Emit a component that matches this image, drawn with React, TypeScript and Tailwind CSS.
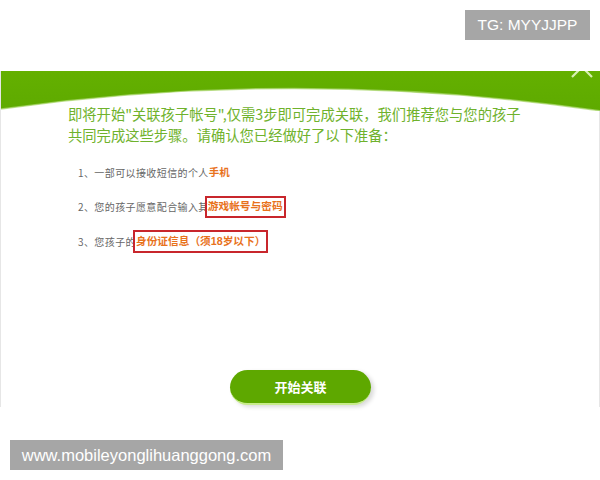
import React from "react";

const cjk = { fontFamily: '"Noto Sans CJK SC", "Noto Sans", sans-serif' };
const latin = { fontFamily: '"Liberation Sans", Arial, sans-serif' };

export default function App() {
  return (
    <div className="relative w-[600px] h-[480px] bg-white overflow-hidden" style={cjk}>
      <div className="h-[71px]" />
      <div className="relative h-[336px] flex flex-col border-x border-[#e6e6e6] bg-white">
        <svg width="600" height="40" viewBox="0 0 600 40" className="block shrink-0">
          <defs>
            <linearGradient id="g" x1="0" y1="0" x2="0" y2="1">
              <stop offset="0" stopColor="#64b000" />
              <stop offset="1" stopColor="#5eaa00" />
            </linearGradient>
          </defs>
          <path d="M0 0 H600 V40 Q300 -4 0 38 Z" fill="url(#g)" />
          <path d="M0 38 Q300 -4 600 40" fill="none" stroke="#a8d66a" strokeWidth="1.5" opacity="0.7" />
          <path d="M571 6 L591 -14 M591 6 L571 -14" stroke="#d8f0b0" strokeWidth="2.2" />
        </svg>
        <div className="-mt-[8px] pl-[67px] text-[14.3px] leading-[21px] text-[#6fb22c]">
          <p>即将开始"关联孩子帐号",仅需3步即可完成关联，我们推荐您与您的孩子</p>
          <p>共同完成这些步骤。请确认您已经做好了以下准备：</p>
        </div>
        <div className="mt-[16px] pl-[77px] flex flex-col gap-[12.5px] text-[10px] tracking-[0.4px] text-[#666]">
          <div className="h-[22px] flex items-center">
            1、一部可以接收短信的个人<span className="font-bold text-[#e8721c] text-[10.5px] tracking-normal">手机</span>
          </div>
          <div className="h-[22px] flex items-center">
            2、您的孩子愿意配合输入其
            <span className="-ml-[4px] h-[22px] px-[1px] flex items-center border-2 border-[#c8262c] bg-white/80 font-bold text-[#e8721c] text-[10.7px] tracking-normal">
              游戏帐号与密码
            </span>
          </div>
          <div className="h-[22px] flex items-center">
            3、您孩子的
            <span className="-ml-[3px] h-[23px] px-[1px] flex items-center border-2 border-[#c8262c] bg-white/80 font-bold text-[#e8721c] text-[10.7px] tracking-normal">
              身份证信息（须<span style={latin}>18</span>岁以下）
            </span>
          </div>
        </div>
        <div className="mt-auto mb-[2px] flex justify-center">
          <button className="w-[141px] h-[35px] rounded-full bg-[#5ea800] border-b-2 border-[#c8ec8c] shadow-[3px_2px_4px_rgba(0,0,0,0.15)] text-white font-bold text-[13px] ml-[1px]">
            开始关联
          </button>
        </div>
      </div>
      <div className="absolute left-[465px] top-[10px] w-[125px] h-[30px] bg-[#a6a6a6] text-white text-[15.5px] flex items-center justify-center" style={latin}>
        TG: MYYJJPP
      </div>
      <div className="absolute left-[10px] top-[440px] w-[273px] h-[30px] bg-[#a6a6a6] text-white text-[16.5px] flex items-center justify-center" style={latin}>
        www.mobileyonglihuanggong.com
      </div>
    </div>
  );
}
